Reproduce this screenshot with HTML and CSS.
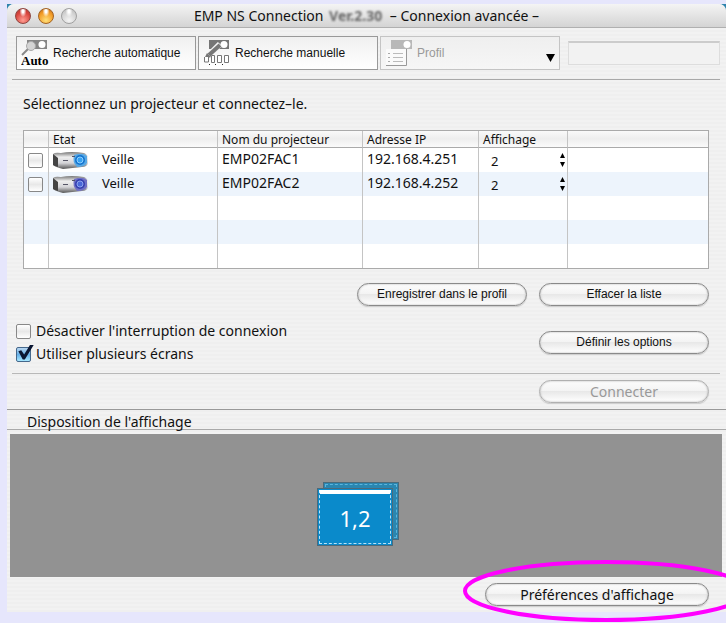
FILE: index.html
```
<!DOCTYPE html>
<html lang="fr">
<head>
    <meta charset="UTF-8">
    <meta name="viewport" content="width=device-width, initial-scale=1.0">
    <title>EMP NS Connection</title>
    <link rel="stylesheet" href="styles.css">
</head>
<body>
    <div class="frame">
        <div class="window">
            <header class="titlebar">
                <div class="lights">
                    <span class="light red"></span>
                    <span class="light orange"></span>
                    <span class="light off"></span>
                </div>
                <h1 class="title">EMP NS Connection <span class="version">Ver.2.30</span> – Connexion avancée –</h1>
            </header>

            <!-- Toolbar -->
            <nav class="toolbar">
                <button type="button" class="tool">
                    <svg width="28" height="28" viewBox="0 0 28 28">
                        <rect x="6" y="1" width="20" height="9" fill="#858585"/>
                        <circle cx="21" cy="5.500" r="3.500" fill="#fff"/>
                        <path d="M7 10L1 16" stroke="#888" stroke-width="2"/>
                        <circle cx="10" cy="7" r="4.500" fill="#d4d4d4" stroke="#aaa"/>
                        <text x="0" y="26" class="auto-text">Auto</text>
                    </svg>
                    <span>Recherche automatique</span>
                </button>
                <button type="button" class="tool">
                    <svg width="28" height="28" viewBox="0 0 28 28">
                        <rect x="6" y="1" width="20" height="9" fill="#757575"/>
                        <circle cx="21" cy="5.500" r="3.500" fill="#fff"/>
                        <path d="M17 5L5 17" stroke="#f4f4f4" stroke-width="6"/>
                        <path d="M17 6L6 16" stroke="#777" stroke-width="4"/>
                        <path d="M4 14L1 20L8 18" fill="#777"/>
                        <path d="M1.500 18v5h4v-5M8.500 16.500h3v7h-3zM14.500 16.500h4v7h-4zM21.500 16.500h4v7h-4z" fill="#fff" stroke="#777"/>
                        <path d="M6 25.500h1M12 25.500h1M19 25.500h1" stroke="#222"/>
                    </svg>
                    <span>Recherche manuelle</span>
                </button>
                <button type="button" class="tool" disabled>
                    <svg width="28" height="28" viewBox="0 0 28 28">
                        <rect x="6" y="1" width="21" height="9" fill="#b8b8b8"/>
                        <circle cx="22" cy="5.500" r="3.500" fill="#fff"/>
                        <path d="M1 10h20v16H1z" fill="#fafafa"/>
                        <path d="M21.500 10v16.500H1" fill="none" stroke="#999"/>
                        <path d="M8 14.500h10M8 18.500h10M8 22.500h10" stroke="#bbb"/>
                        <path d="M3 14.500h2M3 18.500h2M3 22.500h2" stroke="#aaa"/>
                    </svg>
                    <span>Profil</span>
                    <svg class="tool-arrow" width="9" height="8" viewBox="0 0 9 8"><path d="M0 0h9L4.500 8z"/></svg>
                </button>
                <input type="text" class="tool-field" aria-label="Profil" disabled>
            </nav>

            <main>
                <section class="projectors">
                    <p class="intro">Sélectionnez un projecteur et connectez–le.</p>
                    <table class="list">
                        <colgroup>
                            <col class="col-check">
                            <col class="col-state">
                            <col class="col-name">
                            <col class="col-ip">
                            <col class="col-display">
                            <col>
                        </colgroup>
                        <thead>
                            <tr>
                                <th></th>
                                <th>Etat</th>
                                <th>Nom du projecteur</th>
                                <th>Adresse IP</th>
                                <th>Affichage</th>
                                <th></th>
                            </tr>
                        </thead>
                        <tbody>
                            <tr>
                                <td><input type="checkbox" class="check" aria-label="EMP02FAC1"></td>
                                <td>
                                    <div class="state">
                                        <svg width="36" height="18" viewBox="0 0 36 18">
                                            <defs>
                                                <linearGradient id="shell" x1="0" y1="0" x2="0" y2="1">
                                                    <stop offset="0" stop-color="#777"/>
                                                    <stop offset=".3" stop-color="#eee"/>
                                                    <stop offset=".65" stop-color="#d4d4d8"/>
                                                    <stop offset="1" stop-color="#555"/>
                                                </linearGradient>
                                            </defs>
                                            <path d="M0 3Q2 1 8 2Q18 0 31 2Q35 4 35 7V12Q34 16 29 16L10 18Q2 16 0 14z" fill="url(#shell)"/>
                                            <path d="M0 3L5 7V16Q1 15 0 14z" fill="#444"/>
                                            <path d="M21 4Q30 1 34 5V12Q32 16 24 16Q19 11 21 4z" fill="#58a8e4"/>
                                            <circle cx="27" cy="9" r="5" fill="#1474cf"/>
                                            <circle cx="27" cy="9" r="3" fill="#38a2f0" stroke="#8fd0ff"/>
                                            <path d="M10 9.500h5M19 5.500h3" stroke="#556"/>
                                        </svg>
                                        <span>Veille</span>
                                    </div>
                                </td>
                                <td class="value">EMP02FAC1</td>
                                <td class="value">192.168.4.251</td>
                                <td>
                                    <div class="display">
                                        <select aria-label="Affichage EMP02FAC1">
                                            <option>1</option>
                                            <option selected>2</option>
                                        </select>
                                        <svg width="5" height="14" viewBox="0 0 5 14"><path d="M0 5L2.500 0L5 5zM0 9h5L2.500 14z"/></svg>
                                    </div>
                                </td>
                                <td></td>
                            </tr>
                            <tr>
                                <td><input type="checkbox" class="check" aria-label="EMP02FAC2"></td>
                                <td>
                                    <div class="state">
                                        <svg width="36" height="18" viewBox="0 0 36 18">
                                            <path d="M0 3Q2 1 8 2Q18 0 31 2Q35 4 35 7V12Q34 16 29 16L10 18Q2 16 0 14z" fill="url(#shell)"/>
                                            <path d="M0 3L5 7V16Q1 15 0 14z" fill="#444"/>
                                            <path d="M21 4Q30 1 34 5V12Q32 16 24 16Q19 11 21 4z" fill="#7070c4"/>
                                            <circle cx="27" cy="9" r="5" fill="#3540b0"/>
                                            <circle cx="27" cy="9" r="3" fill="#4a68d8" stroke="#8ea4f0"/>
                                            <path d="M10 9.500h5M19 5.500h3" stroke="#556"/>
                                        </svg>
                                        <span>Veille</span>
                                    </div>
                                </td>
                                <td class="value">EMP02FAC2</td>
                                <td class="value">192.168.4.252</td>
                                <td>
                                    <div class="display">
                                        <select aria-label="Affichage EMP02FAC2">
                                            <option>1</option>
                                            <option selected>2</option>
                                        </select>
                                        <svg width="5" height="14" viewBox="0 0 5 14"><path d="M0 5L2.500 0L5 5zM0 9h5L2.500 14z"/></svg>
                                    </div>
                                </td>
                                <td></td>
                            </tr>
                            <tr><td></td><td></td><td></td><td></td><td></td><td></td></tr>
                            <tr><td></td><td></td><td></td><td></td><td></td><td></td></tr>
                            <tr><td></td><td></td><td></td><td></td><td></td><td></td></tr>
                        </tbody>
                    </table>
                    <div class="list-actions">
                        <button type="button" class="pill small">Enregistrer dans le profil</button>
                        <button type="button" class="pill small">Effacer la liste</button>
                    </div>
                </section>

                <section class="options">
                    <div class="checks">
                        <label class="option"><input type="checkbox" class="check"> Désactiver l'interruption de connexion</label>
                        <label class="option"><input type="checkbox" class="check" checked> Utiliser plusieurs écrans</label>
                    </div>
                    <button type="button" class="pill small">Définir les options</button>
                </section>

                <div class="connect">
                    <button type="button" class="pill" disabled>Connecter</button>
                </div>

                <!-- Display layout -->
                <section class="layout">
                    <h2 class="layout-title">Disposition de l'affichage</h2>
                    <div class="stage">
                        <div class="screens">
                            <div class="screen back"><div class="screen-face"></div></div>
                            <div class="screen front"><div class="screen-face">1,2</div></div>
                        </div>
                    </div>
                </section>
            </main>

            <footer class="footer">
                <button type="button" class="pill wide">Préférences d'affichage</button>
                <svg class="highlight" width="288" height="64" viewBox="0 0 288 64">
                    <ellipse cx="144" cy="32" rx="141" ry="29" fill="none" stroke="#ff00ff" stroke-width="4"/>
                </svg>
            </footer>
        </div>
    </div>
</body>
</html>
```
FILE: styles.css
```
* {
    box-sizing: border-box;
}

body {
    margin: 0;
    padding: 4px 0 11px 7px;
    background: #e6e6fc;
    font-family: "Noto Sans", "Open Sans", sans-serif;
    font-size: 13px;
    line-height: 16px;
    color: #111;
    overflow: hidden;
}

button,
input,
select {
    font: inherit;
    color: inherit;
    margin: 0;
}

.frame {
    background: linear-gradient(#2f84ad, #2f84ad) top / 100% 8px no-repeat;
}

.window {
    background: repeating-linear-gradient(#f2f2f2 0 2px, #efefef 2px 4px);
    border-radius: 7px 7px 0 0;
}

/* Title bar */
.titlebar {
    display: grid;
    grid-template-columns: 1fr auto 1fr;
    align-items: center;
    height: 24px;
    padding: 0 8px;
    border-bottom: 1px solid #b0b0b0;
    border-radius: 7px 7px 0 0;
    background: linear-gradient(#f4f4f4, #d4d4d4);
}

.lights {
    display: flex;
    gap: 7px;
}

.light {
    width: 16px;
    height: 16px;
    border: 1px solid #888;
    border-radius: 50%;
}

.red {
    border-color: #8e4540;
    background: radial-gradient(ellipse at 50% 15%, #fff 0 10%, transparent 35%), radial-gradient(circle at 50% 80%, #ff9d92, #d8453d 60%, #a83a34);
}

.orange {
    border-color: #a26222;
    background: radial-gradient(ellipse at 50% 15%, #fff 0 10%, transparent 35%), radial-gradient(circle at 50% 80%, #ffe07a, #f39b25 60%, #b8661a);
}

.off {
    border-color: #a0a0a0;
    background: radial-gradient(ellipse at 50% 15%, #fff 0 10%, transparent 35%), radial-gradient(circle at 50% 80%, #f4f4f4, #d2d2d2 60%, #b4b4b4);
}

.title {
    margin: 0;
    font-size: 14px;
    font-weight: normal;
    white-space: nowrap;
}

.version {
    margin: 0 4px 0 2px;
    color: #666;
    font-weight: bold;
    filter: blur(1px);
}

/* Toolbar */
.toolbar {
    display: flex;
    align-items: center;
    gap: 2px;
    height: 52px;
    margin: 0 6px 0 5px;
    padding: 0 0 1px 4px;
    border-bottom: 1px solid #a8a8a8;
}

.tool {
    display: flex;
    align-items: center;
    gap: 4px;
    flex: 1 1 180px;
    height: 34px;
    padding: 0 4px;
    border: 1px solid #999;
    background: linear-gradient(#f0f0f0, #fff);
    font-family: "Liberation Sans", Arial, sans-serif;
    font-size: 12px;
    text-align: left;
    white-space: nowrap;
}

.tool:disabled {
    border-color: #c4c4c4;
    background: linear-gradient(#efefef, #f6f6f6);
    color: #999;
}

.tool-arrow {
    margin: 10px 0 0 auto;
}

.auto-text {
    font-family: "Liberation Serif", serif;
    font-size: 13px;
    font-weight: bold;
}

.tool-field {
    flex: 1 1 152px;
    min-width: 0;
    height: 24px;
    margin-left: 6px;
    border: 1px solid #ddd;
    border-top: 2px solid #ccc;
    background: #f2f2f2;
}

/* Projector list */
.projectors {
    padding: 16px 17px 0 16px;
}

.intro {
    margin: 0 0 18px;
    font-size: 14px;
}

.list {
    width: 100%;
    table-layout: fixed;
    border: 1px solid #aaa;
    border-spacing: 0;
    background: #fff;
}

.col-check {
    width: 25px;
}

.col-state {
    width: 169px;
}

.col-name {
    width: 145px;
}

.col-ip {
    width: 116px;
}

.col-display {
    width: 89px;
}

.list th {
    height: 17px;
    padding: 0 0 0 4px;
    border-right: 1px solid #c4c4c4;
    border-bottom: 1px solid #aaa;
    background: linear-gradient(#fafafa, #eee 50%, #fafafa);
    font-size: 12px;
    font-weight: normal;
    line-height: 15px;
    text-align: left;
    white-space: nowrap;
}

.list td {
    height: 24px;
    padding: 0 0 0 4px;
    border-right: 1px solid #c4c4c4;
    white-space: nowrap;
}

.list th:last-child,
.list td:last-child {
    border-right: none;
}

.list tbody tr:nth-child(even) {
    background: #edf4fc;
}

.list .value {
    padding-bottom: 3px;
    font-size: 14px;
}

.check {
    appearance: none;
    display: block;
    flex: none;
    width: 15px;
    height: 15px;
    border: 1px solid #888;
    border-radius: 2px;
    background: linear-gradient(#fff, #e8e8e8 50%, #fff);
}

.check:checked {
    border-color: #45688c;
    background: linear-gradient(#b8d6f0, #66b0e8 50%, #a8e8ff);
}

.check:checked::before {
    content: "";
    display: block;
    width: 17px;
    height: 15px;
    margin-top: -3px;
    background: #0b1733;
    clip-path: polygon(8% 45%, 25% 38%, 42% 66%, 78% 0, 100% 0, 46% 100%, 34% 100%);
}

.state {
    display: flex;
    align-items: center;
    gap: 13px;
}

.state span {
    padding-bottom: 3px;
}

.display {
    display: flex;
    align-items: center;
    justify-content: space-between;
    padding: 0 2px 0 8px;
}

.display select {
    appearance: none;
    flex: 1;
    height: 20px;
    padding: 2px 0 0;
    border: none;
    background: none;
}

/* Buttons */
.pill {
    width: 170px;
    height: 23px;
    padding: 0 8px;
    border: 1px solid #8a8a8a;
    border-radius: 12px;
    background: linear-gradient(#fcfcfc, #f4f4f4 45%, #e8e8e8 50%, #fff);
    box-shadow: inset 0 0 2px #aaa, 0 1px 1px #ccc;
    font-size: 14px;
    line-height: 16px;
    white-space: nowrap;
}

.small {
    padding-bottom: 2px;
    font-family: "Liberation Sans", Arial, sans-serif;
    font-size: 12px;
}

.wide {
    width: 224px;
}

.pill:disabled {
    border-color: #b0b0b0;
    color: #999;
}

.list-actions {
    display: flex;
    justify-content: flex-end;
    gap: 12px;
    padding-top: 14px;
}

/* Options */
.options {
    display: flex;
    align-items: center;
    justify-content: space-between;
    margin: 0 6px 0 5px;
    padding: 17px 11px 11px 4px;
    border-bottom: 1px solid #b8b8b8;
}

.checks {
    display: flex;
    flex-direction: column;
    gap: 7px;
}

.option {
    display: flex;
    align-items: center;
    gap: 5px;
    font-size: 14px;
}

.connect {
    display: flex;
    justify-content: flex-end;
    padding: 6px 17px;
    border-bottom: 1px solid #999;
}

/* Display layout */
.layout-title {
    margin: 0;
    padding: 4px 20px 0;
    border-bottom: 1px solid #aaa;
    font-size: 14px;
    font-weight: normal;
    line-height: 15px;
}

.stage {
    display: flex;
    align-items: center;
    justify-content: center;
    height: 143px;
    margin: 4px 4px 0 3px;
    padding: 17px 16px 0 0;
    background: #929292;
}

.screens {
    position: relative;
    width: 82px;
    height: 64px;
}

.screen {
    position: absolute;
    width: 76px;
    height: 58px;
    padding: 1px;
    background: #0a8acb;
    border: 1px solid #4c6a7a;
}

.screen-face {
    height: 100%;
    border: 1px dashed #b8e2f6;
    color: #fff;
    font-size: 22px;
    line-height: 48px;
    text-align: center;
}

.back {
    top: 0;
    right: 0;
    background: #2a86b0;
}

.back .screen-face {
    border-color: #5cb4dc;
}

.front {
    bottom: 0;
    left: 0;
}

.front .screen-face {
    border-top: 4px solid #fff;
}

.footer {
    position: relative;
    display: flex;
    justify-content: flex-end;
    padding: 6px 17px;
}

.highlight {
    position: absolute;
    right: -24px;
    bottom: -11px;
    pointer-events: none;
}
```
